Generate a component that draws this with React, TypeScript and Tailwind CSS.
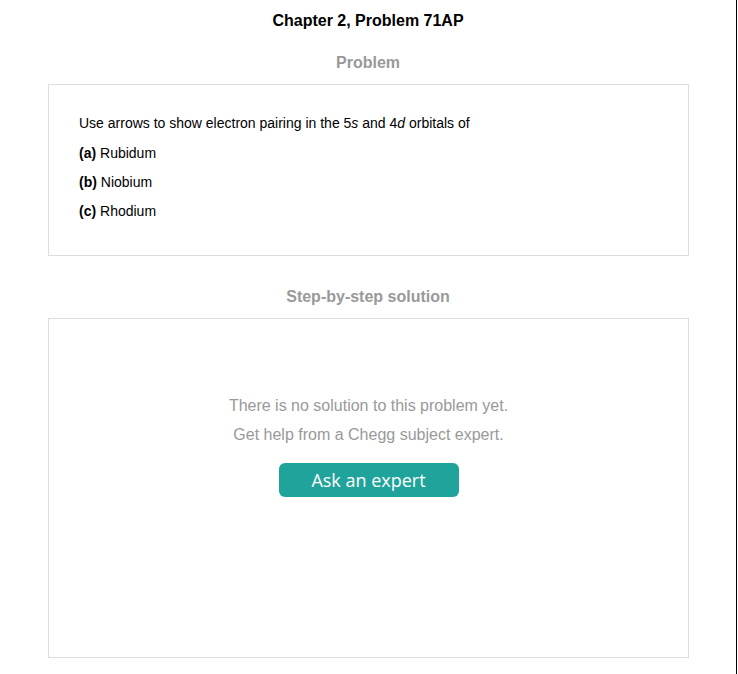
const App = () => {
  return (
    <div className="w-[738px] min-h-screen bg-white">
      <div
        className="w-[737px] min-h-[674px] border-r border-black pt-[12px]"
        style={{ fontFamily: '"Liberation Sans", Arial, sans-serif' }}
      >
        <h1 className="text-center text-[16px] leading-[18px] font-bold text-black">
          Chapter 2, Problem 71AP
        </h1>
        <h2 className="mt-[24px] text-center text-[16px] leading-[18px] font-bold text-[#999999]">
          Problem
        </h2>
        <div className="ml-[48px] mt-[12px] w-[641px] h-[172px] border border-[#dddddd] px-[30px] pt-[30px] text-[14px] leading-[16px] text-black">
          <p>
            Use arrows to show electron pairing in the 5<i>s</i> and 4<i>d</i> orbitals of
          </p>
          <p className="mt-[14px]">
            <b>(a)</b> Rubidum
          </p>
          <p className="mt-[13px]">
            <b>(b)</b> Niobium
          </p>
          <p className="mt-[13px]">
            <b>(c)</b> Rhodium
          </p>
        </div>
        <h2 className="mt-[32px] text-center text-[16px] leading-[18px] font-bold text-[#999999]">
          Step-by-step solution
        </h2>
        <div className="ml-[48px] mt-[12px] w-[641px] h-[340px] border border-[#dddddd] flex flex-col items-center pt-[78px]">
          <p className="text-[16px] leading-[18px] text-[#999999]">
            There is no solution to this problem yet.
          </p>
          <p className="mt-[11px] text-[16px] leading-[18px] text-[#999999]">
            Get help from a Chegg subject expert.
          </p>
          <button
            className="mt-[19px] w-[180px] h-[34px] rounded-[6px] bg-[#20a39a] text-white text-[18px] leading-[34px]"
            style={{ fontFamily: '"Open Sans", sans-serif' }}
          >
            Ask an expert
          </button>
        </div>
      </div>
    </div>
  );
};

export default App;
